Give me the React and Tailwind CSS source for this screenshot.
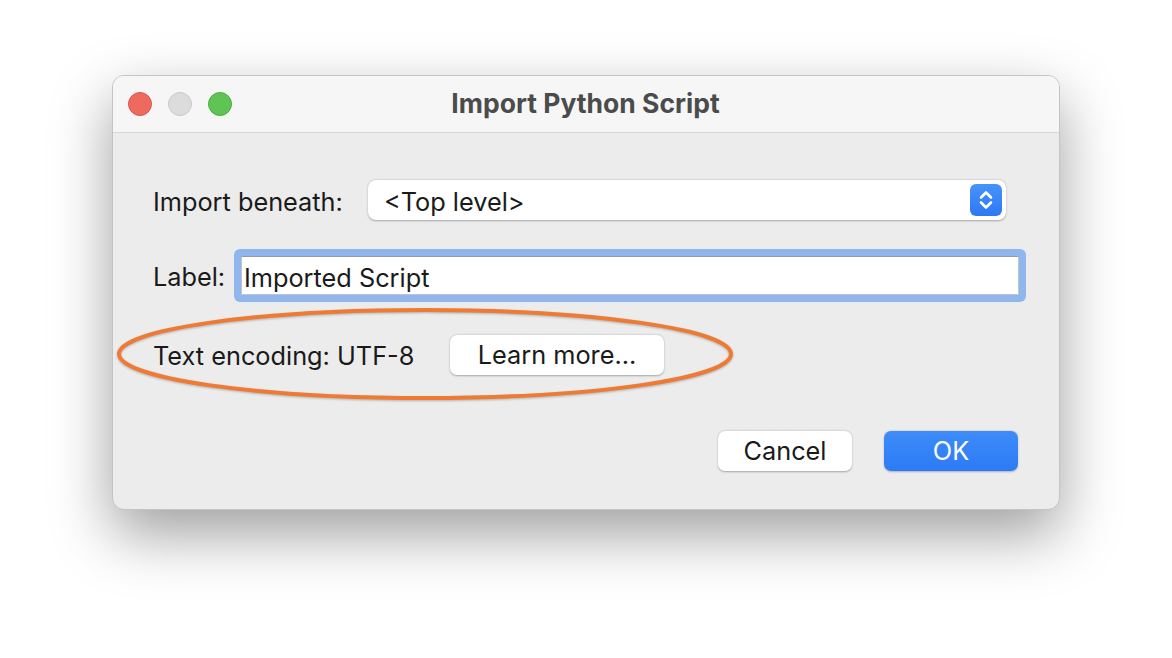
import { useState } from 'react';

const font = { fontFamily: 'Inter, "Noto Sans", sans-serif' };

function Stepper() {
    return (
        <div className="w-[32px] h-[32px] rounded-[6px] bg-gradient-to-b from-[#4793fa] to-[#2f78f4] flex items-center justify-center">
            <svg width="18" height="24" viewBox="0 0 18 24" fill="none" stroke="white" strokeWidth="2.6" strokeLinecap="round" strokeLinejoin="round">
                <path d="M4 9.5 L9 4.5 L14 9.5" />
                <path d="M4 14.5 L9 19.5 L14 14.5" />
            </svg>
        </div>
    );
}

export default function App() {
    const [label, setLabel] = useState('Imported Script');

    return (
        <div className="w-[1172px] h-[658px] bg-white pl-[112px] pt-[75px] relative" style={font}>
            {/* dialog window */}
            <div className="w-[948px] h-[435px] rounded-[12px] border border-[#c4c4c4] bg-[#ececec] overflow-hidden shadow-[0_24px_60px_rgba(0,0,0,0.38)] flex flex-col">
                {/* title bar */}
                <div className="h-[57px] shrink-0 bg-[#f6f6f6] border-b border-[#d6d6d6] relative flex items-center justify-center">
                    <div className="absolute left-[15px] top-[16px] flex gap-[16px]">
                        <span className="w-[24px] h-[24px] rounded-full bg-[#ee6a5e] border border-[#d9574c]" />
                        <span className="w-[24px] h-[24px] rounded-full bg-[#dcdcdc] border border-[#c9c9c9]" />
                        <span className="w-[24px] h-[24px] rounded-full bg-[#5fc454] border border-[#4aae41]" />
                    </div>
                    <span className="text-[26.5px] font-bold text-[#4b4b4b] ml-[-1px] mt-[-1px]">Import Python Script</span>
                </div>

                {/* body */}
                <div className="flex-1 pl-[40px] pr-[33px] pt-[47px] flex flex-col text-[25.3px] text-[#1a1a1a]">
                    <div className="flex items-center h-[40px]">
                        <span className="w-[215px] shrink-0 pt-[4px]">Import beneath:</span>
                        <div className="w-[638px] h-[40px] bg-white rounded-[8px] shadow-[0_0.5px_2px_rgba(0,0,0,0.3)] flex items-center justify-between pl-[16px] pr-[4px]">
                            <span className="pt-[4px]">&lt;Top level&gt;</span>
                            <Stepper />
                        </div>
                    </div>

                    <div className="flex items-center mt-[29px] h-[53px]">
                        <span className="w-[81px] shrink-0 pt-[3px]">Label:</span>
                        <div className="w-[792px] h-[53px] rounded-[6px] bg-[#8fb6ed] p-[7px]">
                            <input
                                value={label}
                                onChange={(e) => setLabel(e.target.value)}
                                className="w-full h-full bg-white border-t border-[#9a9a9a] border-x border-x-[#c4c4c4] border-b border-b-[#c4c4c4] outline-none px-[2px] pt-[3px] text-[25.3px] text-[#1a1a1a]"
                                style={font}
                            />
                        </div>
                    </div>

                    <div className="flex items-center mt-[33px] h-[40px]">
                        <span className="w-[297px] shrink-0 pt-[1px]">Text encoding: UTF-8</span>
                        <button className="w-[214px] h-[40px] bg-white rounded-[7px] shadow-[0_0.5px_2px_rgba(0,0,0,0.3)] text-[25.3px] text-[#1a1a1a]">
                            Learn more...
                        </button>
                    </div>

                    <div className="flex justify-end gap-[32px] mt-[56px] pr-[8px]">
                        <button className="w-[134px] h-[40px] bg-white rounded-[7px] shadow-[0_0.5px_2px_rgba(0,0,0,0.3)] text-[25.3px] text-[#1a1a1a]">
                            Cancel
                        </button>
                        <button className="w-[134px] h-[40px] rounded-[7px] bg-gradient-to-b from-[#3d8cf9] to-[#2d7af5] shadow-[0_0.5px_2px_rgba(0,0,0,0.25)] text-[25.3px] text-white">
                            OK
                        </button>
                    </div>
                </div>
            </div>

            {/* annotation circled over the encoding row */}
            <svg className="absolute left-0 top-0 pointer-events-none" width="1172" height="658">
                <ellipse cx="425" cy="354" rx="306" ry="44" fill="none" stroke="#ee7a33" strokeWidth="4" style={{ filter: 'drop-shadow(0 1px 1px rgba(0,0,0,0.25))' }} />
            </svg>
        </div>
    );
}
